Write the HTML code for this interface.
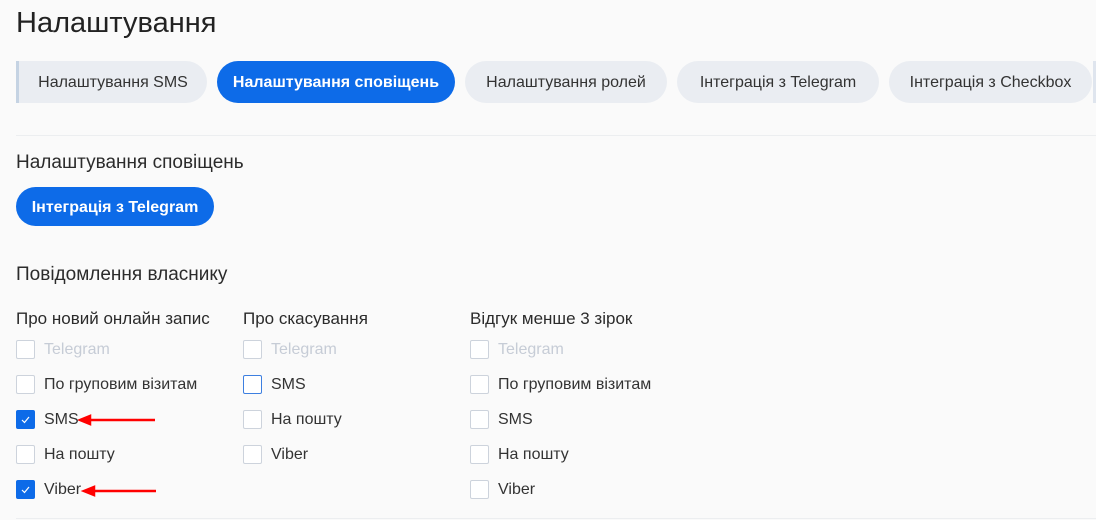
<!DOCTYPE html>
<html><head><meta charset="utf-8"><style>
body{margin:0;width:1096px;height:520px;background:#fafafa;font-family:"Liberation Sans",Arial,sans-serif;color:#2b2b2b;position:relative;overflow:hidden}
.abs{position:absolute;white-space:nowrap}
h1{position:absolute;left:16px;top:7px;margin:0;font-size:29px;font-weight:normal;color:#222}
.tab{position:absolute;top:61px;height:42px;border-radius:21px;background:#eaedf2;font-size:16px;line-height:44px;text-align:center;color:#333}
.tab.on{background:#0d6be8;color:#fff;font-weight:bold}
.line{position:absolute;left:16px;right:0;height:1px;background:#eceef0}
.h2{font-size:19px;color:#2b2b2b}
.col{font-size:17px;color:#2b2b2b}
.cb{position:absolute;width:17px;height:17px;border:1px solid #cdd3dc;border-radius:2px;background:#fff}
.cb.chk{background:#0d6be8;border-color:#0d6be8}
.cb.foc{border-color:#3d7fe0}
.lbl{position:absolute;font-size:16px;color:#333;white-space:nowrap}
.dis{color:#c6ccd6}
</style></head><body>
<h1>Налаштування</h1>
<div class="tab" style="left:16px;width:191px;border-left:3px solid #c5d3e3;border-radius:0 21px 21px 0;box-sizing:border-box">Налаштування SMS</div>
<div class="tab on" style="left:217px;width:238px">Налаштування сповіщень</div>
<div class="tab" style="left:465px;width:202px">Налаштування ролей</div>
<div class="tab" style="left:677px;width:202px">Інтеграція з Telegram</div>
<div class="tab" style="left:889px;width:203px">Інтеграція з Checkbox</div>
<div style="position:absolute;left:1093px;top:61px;width:3px;height:42px;background:#dfe5ee"></div>
<div class="line" style="top:135px"></div>
<div class="abs h2" style="left:16px;top:152px">Налаштування сповіщень</div>
<div class="tab on" style="left:16px;top:187px;width:198px;height:39px;line-height:41px;border-radius:20px">Інтеграція з Telegram</div>
<div class="abs h2" style="left:16px;top:264px">Повідомлення власнику</div>
<div class="abs col" style="left:16px;top:309px">Про новий онлайн запис</div>
<div class="abs col" style="left:243px;top:309px">Про скасування</div>
<div class="abs col" style="left:470px;top:309px">Відгук менше 3 зірок</div>

<div class="cb" style="left:16px;top:340px"></div><div class="lbl dis" style="left:44px;top:341px">Telegram</div>
<div class="cb" style="left:16px;top:375px"></div><div class="lbl" style="left:44px;top:376px">По груповим візитам</div>
<div class="cb chk" style="left:16px;top:410px"><svg width="17" height="17"><path d="M5 9l2.5 2.5L12 6" stroke="#fff" stroke-width="1.2" fill="none"/></svg></div><div class="lbl" style="left:44px;top:411px">SMS</div>
<div class="cb" style="left:16px;top:445px"></div><div class="lbl" style="left:44px;top:446px">На пошту</div>
<div class="cb chk" style="left:16px;top:480px"><svg width="17" height="17"><path d="M5 9l2.5 2.5L12 6" stroke="#fff" stroke-width="1.2" fill="none"/></svg></div><div class="lbl" style="left:44px;top:481px">Viber</div>
<svg style="position:absolute;left:78px;top:413px" width="80" height="90"><path d="M2 7L12 3v8z M10 7H77" fill="red" stroke="red" stroke-width="2.5"/><path d="M6 78L16 74v8z M14 78H78" fill="red" stroke="red" stroke-width="2.5"/></svg>

<div class="cb" style="left:243px;top:340px"></div><div class="lbl dis" style="left:271px;top:341px">Telegram</div>
<div class="cb foc" style="left:243px;top:375px"></div><div class="lbl" style="left:271px;top:376px">SMS</div>
<div class="cb" style="left:243px;top:410px"></div><div class="lbl" style="left:271px;top:411px">На пошту</div>
<div class="cb" style="left:243px;top:445px"></div><div class="lbl" style="left:271px;top:446px">Viber</div>

<div class="cb" style="left:470px;top:340px"></div><div class="lbl dis" style="left:498px;top:341px">Telegram</div>
<div class="cb" style="left:470px;top:375px"></div><div class="lbl" style="left:498px;top:376px">По груповим візитам</div>
<div class="cb" style="left:470px;top:410px"></div><div class="lbl" style="left:498px;top:411px">SMS</div>
<div class="cb" style="left:470px;top:445px"></div><div class="lbl" style="left:498px;top:446px">На пошту</div>
<div class="cb" style="left:470px;top:480px"></div><div class="lbl" style="left:498px;top:481px">Viber</div>

<div class="line" style="top:518px"></div>
</body></html>
